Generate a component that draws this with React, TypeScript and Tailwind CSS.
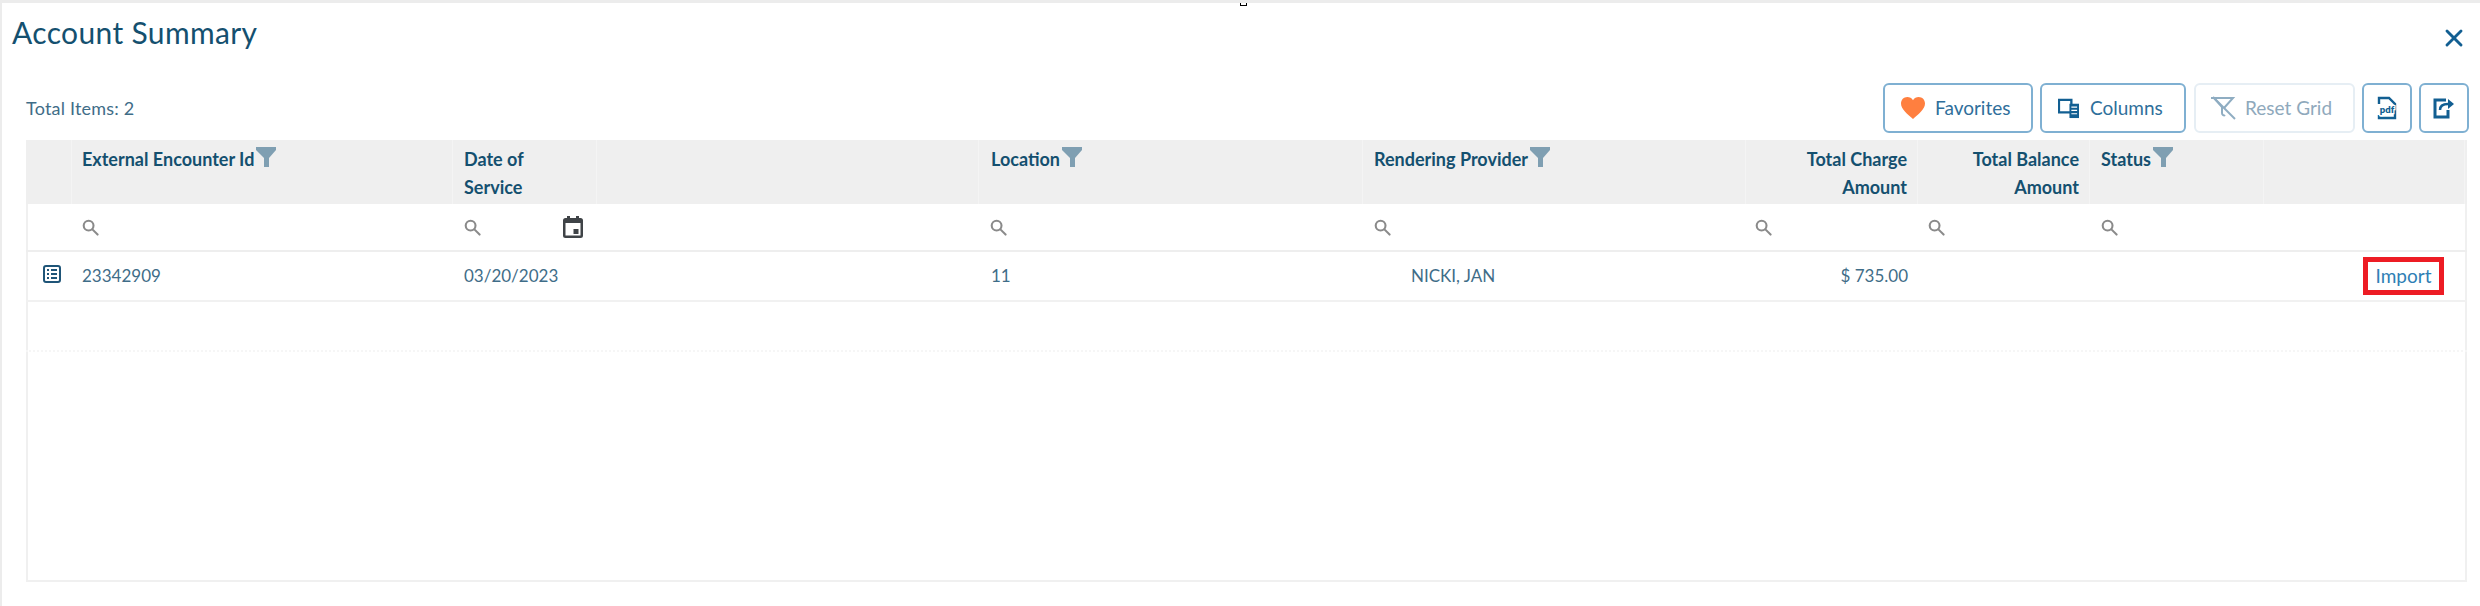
import { X } from "lucide-react";

const gridCols = "grid grid-cols-[46px_381px_144px_382px_384px_383px_172px_172px_174px_201px]";

const FilterIcon = () => (
  <svg viewBox="0 0 20 20" className="w-5 h-5 ml-[2px] -mt-[1px] shrink-0" fill="#7f9fb2">
    <path d="M0 0h20v3l-7 8v9H8v-9L0 3z" />
  </svg>
);

const SearchIcon = () => (
  <svg viewBox="0 0 18 18" className="w-[17px] h-[17px]" fill="none" stroke="#8a8a8a" strokeWidth="2.2">
    <circle cx="7" cy="7" r="5.2" />
    <path d="M11 11l5.5 5.5" strokeLinecap="round" />
  </svg>
);

const CalendarIcon = () => (
  <svg viewBox="0 0 20 22" className="w-5 h-[22px]" fill="#3f4347">
    <path fillRule="evenodd" d="M4 0h3v2h6V0h3v2h1.500A2.500 2.500 0 0 1 20 4.500v15a2.500 2.500 0 0 1-2.500 2.500h-15A2.500 2.500 0 0 1 0 19.500v-15A2.500 2.500 0 0 1 2.500 2H4zM2.500 7v12.500h15V7z" />
    <rect x="10.500" y="13" width="5" height="5" />
  </svg>
);

const RowIcon = () => (
  <svg viewBox="0 0 18 18" className="w-[18px] h-[18px]" fill="none" stroke="#1f5578">
    <rect x="1" y="1" width="16" height="16" rx="2" strokeWidth="2" />
    <path d="M4 5h2M8 5h6M4 9h2M8 9h6M4 13h2M8 13h6" strokeWidth="2" />
  </svg>
);

const HeartIcon = () => (
  <svg viewBox="0 0 24 22" className="w-6 h-[22px]" fill="#ff7f3f">
    <path d="M12 22C7 17.500 0 12.500 0 6.500 0 2.800 2.800 0 6.300 0 8.600 0 10.800 1.200 12 3.200 13.200 1.200 15.400 0 17.700 0 21.200 0 24 2.800 24 6.500c0 6-7 11-12 15.500z" />
  </svg>
);

const ColumnsIcon = () => (
  <svg viewBox="0 0 22 22" className="w-[21px] h-[21px]">
    <path d="M1 2h13v13H1z" fill="none" stroke="#125f92" strokeWidth="2.400" />
    <path d="M12 6h10v15H12z" fill="#125f92" />
    <path d="M14 9.500h6M14 13h6M14 16.500h6" stroke="#fff" strokeWidth="1.300" />
  </svg>
);

const ResetIcon = () => (
  <svg viewBox="0 0 26 24" className="w-[26px] h-6" fill="none" stroke="#8fadc2" strokeWidth="2">
    <path d="M1 2h22l-9 10" />
    <path d="M4 2l8 9v6c0 2 2 3 3 2" />
    <path d="M3 1l22 22" />
  </svg>
);

const PdfIcon = () => (
  <svg viewBox="0 0 20 24" className="w-5 h-6">
    <path d="M2 8V2h10l6 6v14H2v-3" fill="none" stroke="#125f92" strokeWidth="2.400" />
    <text x="10" y="17" textAnchor="middle" fontSize="9.500" fontWeight="800" fontFamily="Lato, sans-serif" fill="#125f92" stroke="#fff" strokeWidth="2.500" paintOrder="stroke">
      pdf
    </text>
  </svg>
);

const ExportIcon = () => (
  <svg viewBox="0 0 22 22" className="w-[22px] h-[22px]" fill="none" stroke="#125f92" strokeWidth="3">
    <path d="M13 3H2v17h13v-7" />
    <path d="M7 13c0-4 3-6 8-6" strokeWidth="2.500" />
    <path d="M15 2l6 5-6 5z" fill="#125f92" stroke="none" />
  </svg>
);

const headers = [
  { label: "", className: "" },
  { label: "External Encounter Id", filter: true, className: "pl-[10px]" },
  { label: "Date of Service", className: "pl-[11px] pr-10" },
  { label: "", className: "" },
  { label: "Location", filter: true, className: "pl-[12px]" },
  { label: "Rendering Provider", filter: true, className: "pl-[11px]" },
  { label: "Total Charge Amount", className: "text-right pr-[10px] pl-6" },
  { label: "Total Balance Amount", className: "text-right pr-[10px] pl-6" },
  { label: "Status", filter: true, className: "pl-[11px]" },
  { label: "", className: "" },
];

export default function App() {
  return (
    <div className="relative h-[606px] w-[2480px] bg-white border-t-[3px] border-l-2 border-[#ececec] font-['Lato',sans-serif] overflow-hidden">
      {/* resize handles from the dialog */}
      <div className="absolute top-[-3px] left-[1238px] w-[7px] h-[6px] bg-white border border-black" />
      <div className="absolute top-[514px] left-[-2px] w-[2px] h-[12px] bg-black" />

      <div className="flex items-start justify-between pl-[10px] pr-[12px] h-[80px]">
        <h1 className="text-[30px] leading-[40px] mt-[9px] tracking-[0.35px] text-[#14506f]">Account Summary</h1>
        <X className="w-7 h-7 mt-[21px] text-[#125f92]" strokeWidth={2.500} />
      </div>

      <div className="flex items-center justify-between pl-[24px] pr-[11px] h-[50px]">
        <span className="text-[18px] tracking-[0.2px] text-[#3f6d88]">Total Items: 2</span>
        <div className="flex items-center">
          <button className="flex items-center w-[150px] h-[50px] pl-[16px] gap-[10px] rounded-md border-2 border-[#7fb0d2] text-[19px] text-[#2f6f9b]">
            <HeartIcon />
            Favorites
          </button>
          <button className="flex items-center w-[146px] h-[50px] ml-[7px] pl-[16px] gap-[11px] rounded-md border-2 border-[#7fb0d2] text-[19px] text-[#2f6f9b]">
            <ColumnsIcon />
            Columns
          </button>
          <button className="flex items-center w-[161px] h-[50px] ml-[8px] pl-[14px] gap-[9px] rounded-md border-2 border-[#e6eef4] text-[19px] text-[#8fa9bc]">
            <ResetIcon />
            Reset Grid
          </button>
          <button className="flex items-center justify-center w-[50px] h-[50px] ml-[7px] rounded-md border-2 border-[#7fb0d2]">
            <PdfIcon />
          </button>
          <button className="flex items-center justify-center w-[50px] h-[50px] ml-[7px] rounded-md border-2 border-[#7fb0d2]">
            <ExportIcon />
          </button>
        </div>
      </div>

      <div className="ml-[24px] mt-[7px] w-[2441px] h-[442px] border-x-2 border-b-2 border-[#f0f0f0]">
        <div className={`${gridCols} h-[64px] bg-[#efefef] -mx-[2px]`}>
          {headers.map((h, i) => (
            <div key={i} className={`border-r border-[#f4f4f4] pt-[5px] text-[18px] leading-[28px] font-bold text-[#14506f] ${h.className}`}>
              {h.label}
              {h.filter && <span className="inline-block align-top mt-[3px]"><FilterIcon /></span>}
            </div>
          ))}
        </div>

        <div className={`${gridCols} h-[48px] -mx-[2px] border-b-2 border-[#eeeeee] items-center`}>
          <div />
          <div className="pl-[10px] flex"><SearchIcon /></div>
          <div className="pl-[11px] flex items-center justify-between pr-[14px]"><SearchIcon /><CalendarIcon /></div>
          <div />
          <div className="pl-[11px] flex"><SearchIcon /></div>
          <div className="pl-[11px] flex"><SearchIcon /></div>
          <div className="pl-[9px] flex"><SearchIcon /></div>
          <div className="pl-[10px] flex"><SearchIcon /></div>
          <div className="pl-[11px] flex"><SearchIcon /></div>
          <div />
        </div>

        <div className={`${gridCols} h-[50px] -mx-[2px] border-b-2 border-[#f1f1f1] items-center text-[17px] text-[#3f6d88]`}>
          <div className="pl-[17px] -mt-[4px]"><RowIcon /></div>
          <div className="pl-[10px]">23342909</div>
          <div className="pl-[11px]">03/20/2023</div>
          <div />
          <div className="pl-[12px]">11</div>
          <div className="pl-[48px]">NICKI, JAN</div>
          <div className="text-right pr-[10px]">$ 735.00</div>
          <div />
          <div />
          <div className="flex justify-end pr-[21px]">
            <a className="flex items-center justify-center w-[81px] h-[38px] border-[5px] border-[#ed1c24] text-[19px] text-[#2f7fb5]">Import</a>
          </div>
        </div>

        {/* second row is blanked out in the picture, only its faint rule is left */}
        <div className="h-[50px] -mx-[2px] border-b-2 border-dotted border-[#f6f6f6]" />
      </div>
    </div>
  );
}
